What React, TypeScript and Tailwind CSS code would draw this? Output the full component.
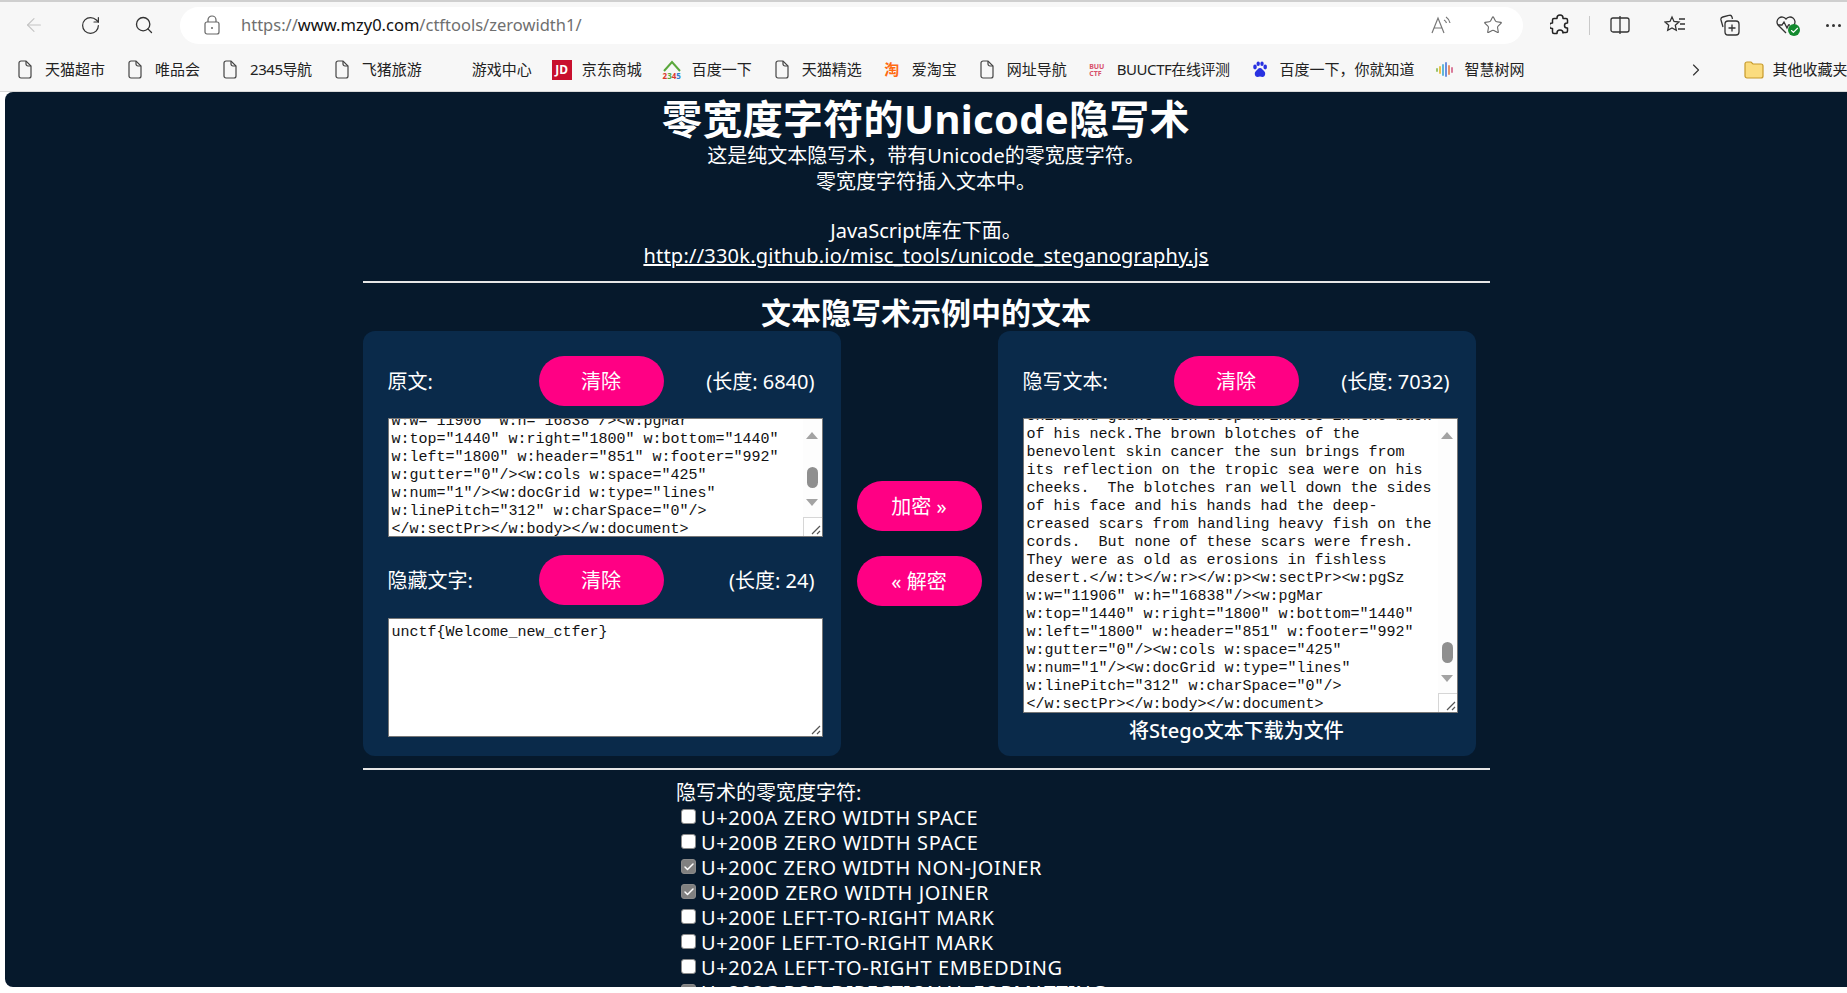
import { ArrowLeft, RotateCw, Search, Star, ChevronRight, Check } from 'lucide-react'

const uiFont = "font-['Noto_Sans','Noto_Sans_CJK_SC',sans-serif]"

function FileIcon() {
  return (
    <svg width="14" height="19" viewBox="0 0 14 19" fill="none" stroke="#444" strokeWidth="1.2">
      <path d="M3 1h5l5 5v10a2 2 0 0 1-2 2H3a2 2 0 0 1-2-2V3a2 2 0 0 1 2-2z" />
      <path d="M8 1v3a2 2 0 0 0 2 2h3" />
    </svg>
  )
}

function PawIcon() {
  return (
    <svg width="18" height="18" viewBox="0 0 18 18" fill="#2932e1">
      <ellipse cx="4" cy="6" rx="1.8" ry="2.4" />
      <ellipse cx="7.2" cy="2.8" rx="1.7" ry="2.3" />
      <ellipse cx="11" cy="2.8" rx="1.7" ry="2.3" />
      <ellipse cx="14.2" cy="6" rx="1.8" ry="2.4" />
      <path d="M9 7c-2 0-2.600 2-4 3-2 1.400-1.500 6 1.500 6 1 0 1.700-.4 2.500-.4s1.500.4 2.500.4c3 0 3.500-4.600 1.500-6-1.400-1-2-3-4-3z" />
    </svg>
  )
}

function BarsIcon() {
  const bars = [
    ['h-[4px]', 'bg-[#9ac46a]'],
    ['h-[8px]', 'bg-[#e8c34c]'],
    ['h-[12px]', 'bg-[#5fb6d9]'],
    ['h-[15px]', 'bg-[#6b8fe0]'],
    ['h-[10px]', 'bg-[#e88f6a]'],
    ['h-[6px]', 'bg-[#d97a9a]'],
  ]
  return (
    <span className="flex items-center gap-[1px]">
      {bars.map(([h, c], i) => (
        <span key={i} className={`w-[2px] rounded-full ${h} ${c}`} />
      ))}
    </span>
  )
}

function HouseIcon() {
  return (
    <span className="flex w-[21px] flex-col items-center">
      <svg width="20" height="12" viewBox="0 0 20 12" fill="none" stroke="#5aa83c" strokeWidth="2">
        <path d="M2 11 10 2l8 9" />
      </svg>
      <span className="text-[8px] leading-[8px] font-bold text-[#d9382c]">
        2<span className="text-[#5aa83c]">3</span>4<span className="text-[#2f7fd0]">5</span>
      </span>
    </span>
  )
}

const bookmarks = [
  { label: '天猫超市', icon: <FileIcon /> },
  { label: '唯品会', icon: <FileIcon /> },
  { label: '2345导航', icon: <FileIcon />, tight: true },
  { label: '飞猪旅游', icon: <FileIcon /> },
  { label: '游戏中心', icon: null },
  {
    label: '京东商城',
    icon: <span className="flex h-[20px] w-[20px] items-center justify-center bg-[#c8102e] text-[12px] font-bold text-white">JD</span>,
  },
  { label: '百度一下', icon: <HouseIcon /> },
  { label: '天猫精选', icon: <FileIcon /> },
  { label: '爱淘宝', icon: <span className="text-[15px] leading-none font-bold text-[#ff6a13]">淘</span> },
  { label: '网址导航', icon: <FileIcon /> },
  { label: 'BUUCTF在线评测', icon: <span className="text-[7px] leading-[7px] font-bold text-[#d8506a]">BUU<br />CTF</span>, tight: true },
  { label: '百度一下，你就知道', icon: <PawIcon /> },
  { label: '智慧树网', icon: <BarsIcon /> },
]

function Toolbar() {
  return (
    <div className="flex h-[46px] items-center bg-[#f7f7f7]">
      <div className="flex w-[180px] shrink-0 items-center">
        <span className="flex w-[68px] justify-center"><ArrowLeft size={22} strokeWidth={1.2} color="#c4c4c4" /></span>
        <span className="flex w-[44px] justify-center"><RotateCw size={21} strokeWidth={1.4} color="#333" /></span>
        <span className="flex w-[64px] justify-center"><Search size={20} strokeWidth={1.6} color="#333" /></span>
      </div>
      <div className="flex h-[37px] w-[1343px] shrink-0 items-center rounded-full bg-white">
        <svg className="ml-[24px]" width="16" height="20" viewBox="0 0 16 20" fill="none" stroke="#666" strokeWidth="1.2">
          <rect x="1" y="7" width="14" height="12" rx="2" />
          <path d="M4 7V5a4 4 0 0 1 8 0v2" />
          <circle cx="8" cy="13" r="1" fill="#666" stroke="none" />
        </svg>
        <span className="ml-[21px] text-[16.5px] text-[#6f6f6f]">
          https://<span className="text-[#111]">www.mzy0.com</span>/ctftools/zerowidth1/
        </span>
        <span className="ml-auto flex items-center gap-[30px] pr-[20px]">
          <svg width="22" height="20" viewBox="0 0 22 20" fill="none" stroke="#777" strokeWidth="1.2">
            <path d="M1 18 7 3l6 15M3.500 13h7" />
            <path d="M13 5a5 5 0 0 1 2.500 3M15 2a9 9 0 0 1 4 6" />
          </svg>
          <Star size={20} strokeWidth={1.3} color="#666" />
        </span>
      </div>
      <span className="ml-[24px] flex w-[26px] justify-center">
        <svg width="20" height="22" viewBox="0 0 20 22" fill="none" stroke="#222" strokeWidth="1.5" strokeLinejoin="round">
          <path d="M7 4.500V4a3 3 0 0 1 6 0v.500h3a1.500 1.500 0 0 1 1.500 1.500v3H17a2.500 2.500 0 0 0 0 5h.500v3a1.500 1.500 0 0 1-1.500 1.500h-3V19a3 3 0 0 0-6 0v.500H4A1.500 1.500 0 0 1 2.500 18v-3.500H2a2.700 2.700 0 0 1 0-5.400h.500V6A1.500 1.500 0 0 1 4 4.500z" />
        </svg>
      </span>
      <span className="ml-[16px] h-[19px] w-[1px] bg-[#c9c9c9]" />
      <span className="ml-[18px] flex w-[24px] justify-center">
        <svg width="20" height="20" viewBox="0 0 20 20" fill="none" stroke="#333" strokeWidth="1.3">
          <rect x="1" y="3" width="18" height="14" rx="2" />
          <path d="M10 1v18" />
        </svg>
      </span>
      <span className="ml-[31px] flex w-[24px] justify-center">
        <svg width="22" height="20" viewBox="0 0 22 20" fill="none" stroke="#333" strokeWidth="1.3">
          <path d="M8 2l2 4.500 5 .5-3.700 3.300 1 5L8 13l-4.300 2.300 1-5L1 7l5-.5z" />
          <path d="M15 4h6M16 9h5M14 14h7" />
        </svg>
      </span>
      <span className="ml-[31px] flex w-[24px] justify-center">
        <svg width="22" height="22" viewBox="0 0 22 22" fill="none" stroke="#333" strokeWidth="1.3">
          <path d="M4 13 2 6a2.500 2.500 0 0 1 1.800-3l6-1.500A2.500 2.500 0 0 1 13 3l.5 2" />
          <rect x="6" y="7" width="14" height="14" rx="3" />
          <path d="M13 10.500v7M9.500 14h7" />
        </svg>
      </span>
      <span className="relative ml-[32px] flex w-[24px] justify-center">
        <svg width="22" height="20" viewBox="0 0 22 20" fill="none" stroke="#333" strokeWidth="1.3">
          <path d="M11 18 3 10a5 5 0 0 1 8-6 5 5 0 0 1 8 6l-1 1" />
          <path d="M3 10h4l2-3 3 6 1.500-3H15" />
        </svg>
        <span className="absolute -right-[2px] top-[9px] flex h-[12px] w-[12px] items-center justify-center rounded-full bg-[#128a2e]">
          <Check size={9} strokeWidth={3} color="#fff" />
        </span>
      </span>
      <span className="ml-[28px] flex gap-[3px] text-[0px]">
        <span className="h-[3px] w-[3px] rounded-full bg-[#333]" />
        <span className="h-[3px] w-[3px] rounded-full bg-[#333]" />
        <span className="h-[3px] w-[3px] rounded-full bg-[#333]" />
      </span>
    </div>
  )
}

function BookmarkBar() {
  return (
    <div className="flex h-[44px] items-center overflow-hidden border-b border-[#d9d9d9] bg-[#f7f7f7] pl-[15px] text-[15px] text-[#222]">
      <div className="flex items-center gap-[20px]">
        {bookmarks.map((b) => (
          <div key={b.label} className="flex items-center gap-[10px] whitespace-nowrap">
            <span className="flex h-[20px] w-[20px] items-center justify-center">{b.icon}</span>
            <span className={b.tight ? 'tracking-[-0.45px]' : ''}>{b.label}</span>
          </div>
        ))}
      </div>
      <span className="ml-[161px] flex w-[20px] justify-center"><ChevronRight size={20} strokeWidth={1.4} color="#333" /></span>
      <span className="ml-[19px] h-[24px] w-[1px] bg-[#d4d4d4]" />
      <span className="ml-[19px] flex w-[21px] shrink-0">
        <svg width="20" height="20" viewBox="0 0 20 20" fill="#fbdc7e" stroke="#c79a2a" strokeWidth="1.2">
          <path d="M1 4a2 2 0 0 1 2-2h4l2 2h8a2 2 0 0 1 2 2v10a2 2 0 0 1-2 2H3a2 2 0 0 1-2-2z" />
        </svg>
      </span>
      <span className="ml-[8px] whitespace-nowrap">其他收藏夹</span>
    </div>
  )
}

function ResizeGrip() {
  return (
    <svg className="absolute bottom-[1px] right-[1px]" width="10" height="10" viewBox="0 0 10 10" stroke="#555" strokeWidth="1.200">
      <path d="M1 9 9 1M6 9l3-3" />
    </svg>
  )
}

function TextBox({ lines, className, offset, thumb }: { lines: string[]; className: string; offset: string; thumb?: string }) {
  return (
    <div className={`relative overflow-hidden border border-[#767676] bg-white font-['Liberation_Mono',monospace] text-[15px] leading-[18px] text-[#111] ${className}`}>
      <div className={`pl-[3px] ${offset}`}>
        {lines.map((l, i) => (
          <div key={i} className="whitespace-pre">{l}</div>
        ))}
      </div>
      {thumb ? (
        <div className="absolute bottom-0 right-0 top-0 w-[19px] bg-[#fdfdfd]">
          <span className="absolute left-[3px] top-[13px] h-0 w-0 border-x-[6px] border-b-[7px] border-x-transparent border-b-[#a3a3a3]" />
          <span className={`absolute left-[4px] h-[21px] w-[11px] rounded-full bg-[#8f8f8f] ${thumb}`} />
          <span className="absolute bottom-[30px] left-[3px] h-0 w-0 border-x-[6px] border-t-[7px] border-x-transparent border-t-[#a3a3a3]" />
          <span className="absolute bottom-0 right-0 h-[19px] w-[19px] border-l border-t border-[#d6d6d6] bg-white" />
        </div>
      ) : null}
      <ResizeGrip />
    </div>
  )
}

function PinkButton({ children, className }: { children: string; className: string }) {
  return (
    <button type="button" className={`h-[50px] w-[125px] rounded-full bg-[#ff0084] text-[20px] text-white ${className}`}>
      {children}
    </button>
  )
}

function PanelRow({ label, count }: { label: string; count: string }) {
  return (
    <div className="flex h-[50px] items-center text-[20px] text-white">
      <span className="w-[151px] shrink-0">{label}</span>
      <PinkButton className="shrink-0">清除</PinkButton>
      <span className="ml-auto pr-[8px]">{count}</span>
    </div>
  )
}

const originalLines = [
  'w:w="11906" w:h="16838"/><w:pgMar',
  'w:top="1440" w:right="1800" w:bottom="1440"',
  'w:left="1800" w:header="851" w:footer="992"',
  'w:gutter="0"/><w:cols w:space="425"',
  'w:num="1"/><w:docGrid w:type="lines"',
  'w:linePitch="312" w:charSpace="0"/>',
  '</w:sectPr></w:body></w:document>',
]

const stegoLines = [
  'chin and gaunt with deep wrinkles in the back',
  'of his neck.The brown blotches of the',
  'benevolent skin cancer the sun brings from',
  'its reflection on the tropic sea were on his',
  'cheeks.  The blotches ran well down the sides',
  'of his face and his hands had the deep-',
  'creased scars from handling heavy fish on the',
  'cords.  But none of these scars were fresh.',
  'They were as old as erosions in fishless',
  'desert.</w:t></w:r></w:p><w:sectPr><w:pgSz',
  'w:w="11906" w:h="16838"/><w:pgMar',
  ...originalLines.slice(1),
]

const zeroWidth = [
  { label: 'U+200A ZERO WIDTH SPACE', on: false },
  { label: 'U+200B ZERO WIDTH SPACE', on: false },
  { label: 'U+200C ZERO WIDTH NON-JOINER', on: true },
  { label: 'U+200D ZERO WIDTH JOINER', on: true },
  { label: 'U+200E LEFT-TO-RIGHT MARK', on: false },
  { label: 'U+200F LEFT-TO-RIGHT MARK', on: false },
  { label: 'U+202A LEFT-TO-RIGHT EMBEDDING', on: false },
  { label: 'U+202C POP DIRECTIONAL FORMATTING', on: true },
]

function CheckRow({ label, on }: { label: string; on: boolean }) {
  return (
    <label className="flex h-[25px] items-center whitespace-nowrap pl-[5px] tracking-[0.62px]">
      <span className={`relative -mt-[2px] mr-[5px] flex h-[15px] w-[15px] items-center justify-center rounded-[3px] border border-[#8a8a8a] ${on ? 'bg-[#808080]' : 'bg-white'}`}>
        {on ? <Check size={12} strokeWidth={3} color="#fff" /> : null}
      </span>
      {label}
    </label>
  )
}

export default function App() {
  return (
    <div className={`flex h-[993px] flex-col overflow-hidden bg-white ${uiFont}`}>
      <div className="h-[2px] shrink-0 bg-[#cfcfcf]" />
      <Toolbar />
      <BookmarkBar />
      <main className="ml-[5px] h-[895px] shrink-0 overflow-hidden rounded-l-[8px] bg-[#06192c] text-center text-[20px] leading-[25px] text-white">
        <h1 className="h-[51px] pt-[2px] text-[40px] leading-[49px] font-bold tracking-[0.3px]">零宽度字符的Unicode隐写术</h1>
        <p>这是纯文本隐写术，带有Unicode的零宽度字符。</p>
        <p className="mt-[1px]">零宽度字符插入文本中。</p>
        <p className="mt-[24px]">JavaScript库在下面。</p>
        <a className="tracking-[0.22px] underline">http://330k.github.io/misc_tools/unicode_steganography.js</a>

        <div className="mx-auto w-[1127px] pl-0">
          <hr className="mt-[13px] border-t-2 border-[#e6e6e6]" />
          <h2 className="h-[48px] pt-[12px] text-[30px] leading-[36px] font-bold">文本隐写术示例中的文本</h2>

          <div className="flex text-left">
            <section className="h-[425px] w-[478px] shrink-0 rounded-[12px] bg-[#0a2a4a] pl-[25px] pr-[18px] pt-[25px]">
              <PanelRow label="原文:" count="(长度: 6840)" />
              <TextBox lines={originalLines} className="mt-[12px] h-[119px]" offset="-mt-[6px]" thumb="top-[48px]" />
              <div className="mt-[18px]">
                <PanelRow label="隐藏文字:" count="(长度: 24)" />
              </div>
              <TextBox lines={['unctf{Welcome_new_ctfer}']} className="mt-[13px] h-[119px]" offset="mt-[5px]" />
            </section>

            <div className="flex w-[157px] shrink-0 flex-col items-center gap-[25px] pt-[150px]">
              <PinkButton className="shrink-0">加密 »</PinkButton>
              <PinkButton className="shrink-0">« 解密</PinkButton>
            </div>

            <section className="h-[425px] w-[478px] shrink-0 rounded-[12px] bg-[#0a2a4a] pl-[25px] pr-[18px] pt-[25px]">
              <PanelRow label="隐写文本:" count="(长度: 7032)" />
              <TextBox lines={stegoLines} className="mt-[12px] h-[295px]" offset="-mt-[11px]" thumb="top-[223px]" />
              <p className="-ml-[7px] mt-[5px] text-center font-medium">将Stego文本下载为文件</p>
            </section>
          </div>

          <hr className="mt-[12px] border-t-2 border-[#e6e6e6]" />
        </div>

        <div className="ml-[671px] mt-[10px] text-left">
          <p>隐写术的零宽度字符:</p>
          {zeroWidth.map((z) => (
            <CheckRow key={z.label} label={z.label} on={z.on} />
          ))}
        </div>
      </main>
    </div>
  )
}
